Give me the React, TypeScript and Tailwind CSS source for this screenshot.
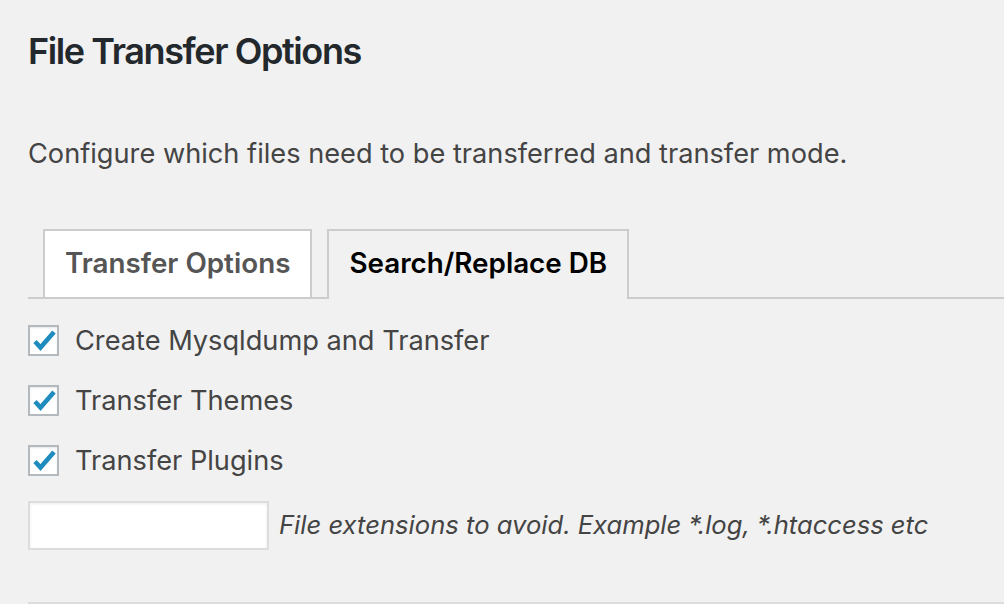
const options = ['Create Mysqldump and Transfer', 'Transfer Themes', 'Transfer Plugins']

function Check() {
  return (
    <span className="relative block h-[31px] w-[31px] shrink-0 border-2 border-[#b4b9be] bg-white shadow-[inset_0_1px_2px_rgba(0,0,0,0.1)]">
      <svg viewBox="0 0 31 31" className="absolute left-[-2px] top-[-2px] h-[31px] w-[31px]">
        <path d="M7 16.5 L12.5 22.5 L26 7" fill="none" stroke="#1e8cbe" strokeWidth="4.6" strokeLinejoin="miter" />
      </svg>
    </span>
  )
}

export default function App() {
  return (
    <div className="h-[604px] w-[1004px] overflow-hidden bg-[#f1f1f1] pl-[28px] font-['Inter','Liberation_Sans',sans-serif]">
      <h2 className="pt-[28px] text-[36px] font-semibold leading-[46px] tracking-[-1.4px] text-[#23282d]">File Transfer Options</h2>
      <p className="mt-[62px] text-[27.2px] leading-[36px] text-[#444]">
        Configure which files need to be transferred and transfer mode.
      </p>

      <div className="mt-[57px] flex gap-[15px] border-b-2 border-[#ccc] pl-[15px]">
        <div className="-mb-[2px] flex h-[70px] items-center border-2 border-[#ccc] bg-white px-[20px] text-[27.8px] font-semibold text-[#555]">
          Transfer Options
        </div>
        <div className="-mb-[2px] flex h-[70px] items-center border-2 border-b-0 border-[#ccc] bg-[#f1f1f1] px-[20px] pb-[2px] text-[27.8px] font-semibold text-black">
          Search/Replace DB
        </div>
      </div>

      <div className="mt-[26px] flex flex-col gap-[29px]">
        {options.map((o) => (
          <label key={o} className="flex items-center gap-[16px] text-[27.2px] leading-[31px] text-[#444]">
            <Check />
            <span>{o}</span>
          </label>
        ))}
      </div>

      <div className="mt-[25px] flex items-center gap-[10px]">
        <input
          type="text"
          className="h-[49px] w-[241px] border-2 border-[#ddd] bg-white shadow-[inset_0_1px_3px_rgba(0,0,0,0.08)] outline-none"
        />
        <span className="text-[25.6px] italic text-[#444]">File extensions to avoid. Example *.log, *.htaccess etc</span>
      </div>

      <div className="mt-[52px] border-t-2 border-[#ddd]" />
    </div>
  )
}
